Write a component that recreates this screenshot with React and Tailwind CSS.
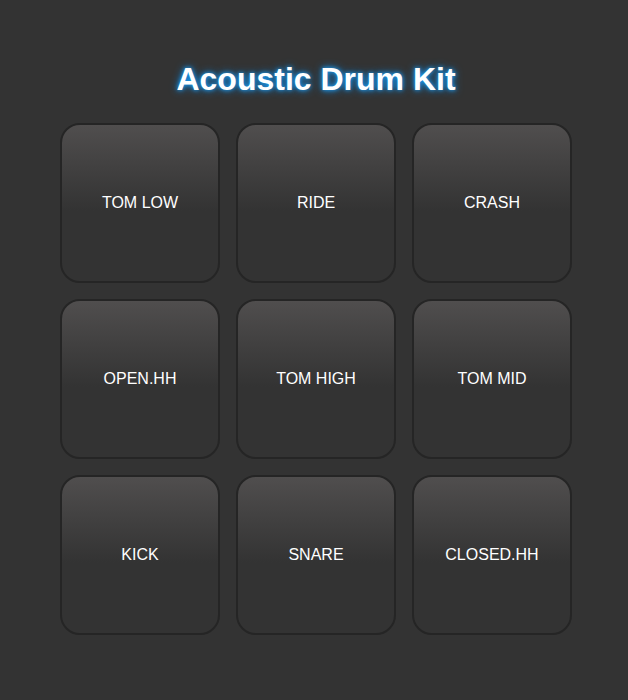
import React from 'react';

const pads = ['TOM LOW', 'RIDE', 'CRASH', 'OPEN.HH', 'TOM HIGH', 'TOM MID', 'KICK', 'SNARE', 'CLOSED.HH'];

const DrumPad = ({ label }) => (
  <button className="w-[160px] h-[160px] rounded-[20px] border-2 border-[#252525] bg-gradient-to-b from-[#504e4e] to-[#333333] to-[55%] flex items-center justify-center text-white text-base">
    {label}
  </button>
);

export default function App() {
  return (
    <div className="min-h-[700px] bg-[#333333] flex flex-col items-center pl-[4px] pt-[61px] font-['Liberation_Sans',Arial,sans-serif]">
      <h1 className="text-[32px] leading-[37px] font-bold text-white [text-shadow:0_0_4px_#1ea5ff,0_0_8px_#0a84e0]">
        Acoustic Drum Kit
      </h1>
      <div className="mt-[25px] grid grid-cols-3 gap-4">
        {pads.map((p) => (
          <DrumPad key={p} label={p} />
        ))}
      </div>
    </div>
  );
}
